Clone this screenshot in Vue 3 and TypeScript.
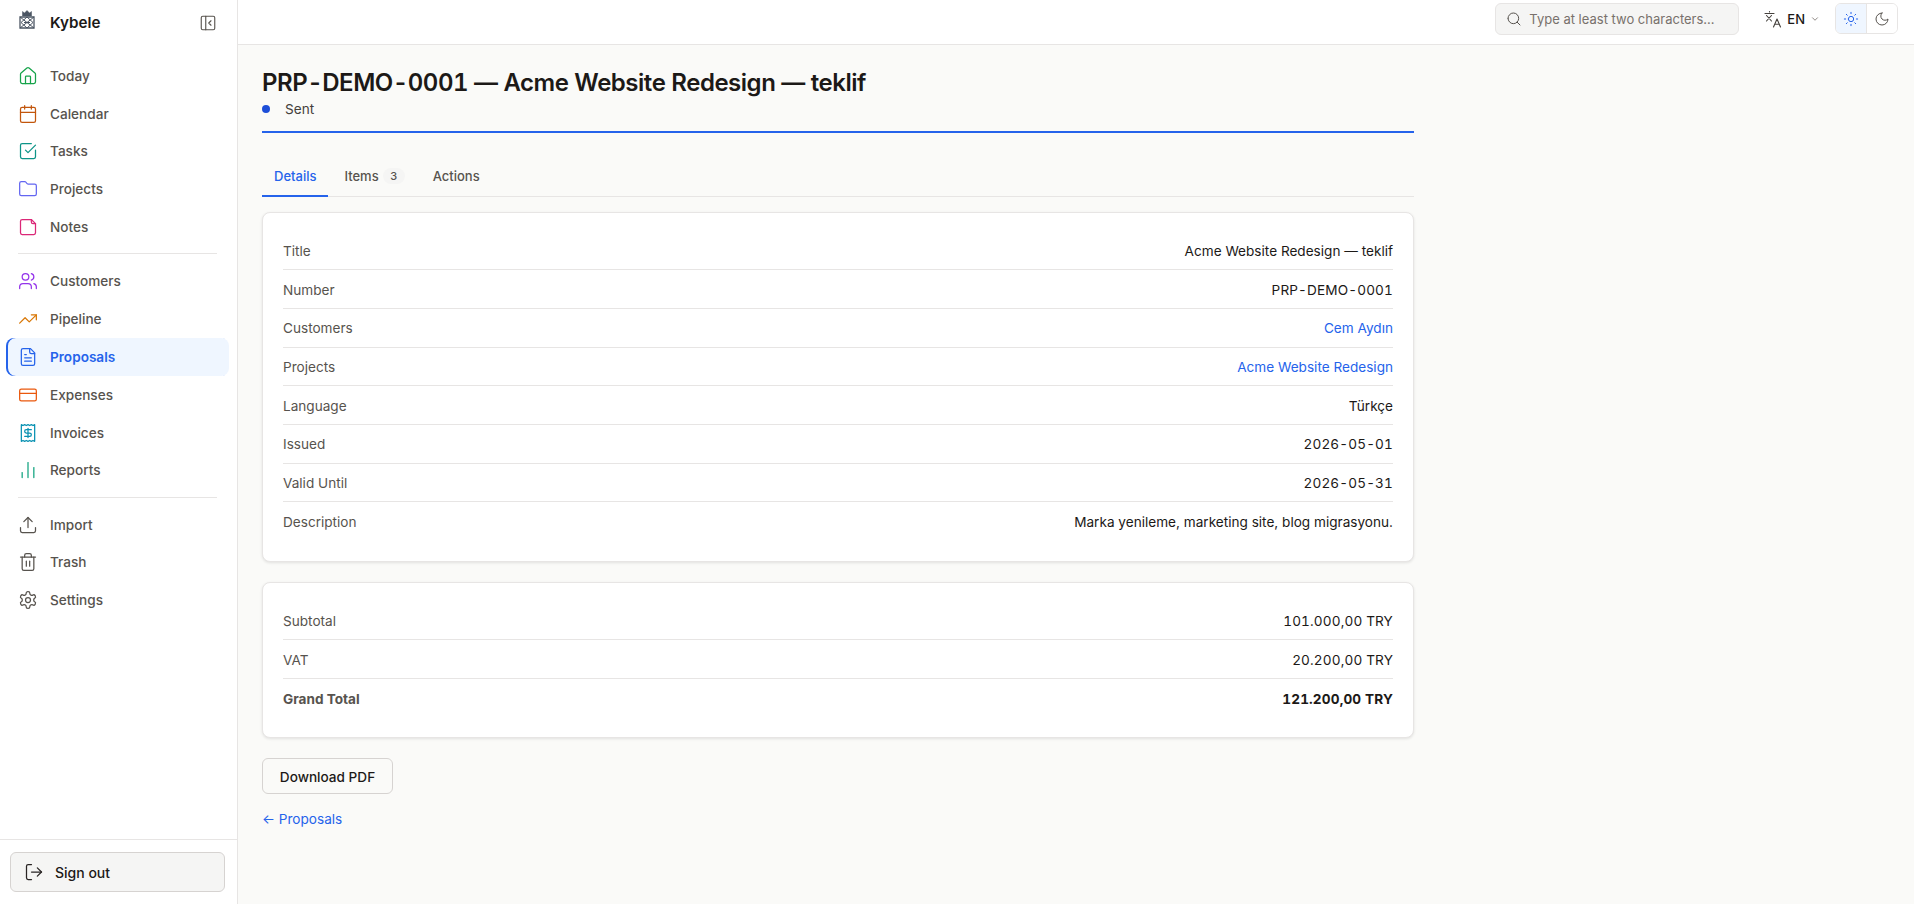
<script setup lang="ts">
interface NavItem {
  label: string
  color: string
  paths: string[]
  active?: boolean
}

const mainNav: NavItem[] = [
  { label: 'Today', color: '#16a34a', paths: ['M15 21v-8a1 1 0 0 0-1-1h-4a1 1 0 0 0-1 1v8', 'M3 10a2 2 0 0 1 .709-1.528l7-5.999a2 2 0 0 1 2.582 0l7 5.999A2 2 0 0 1 21 10v9a2 2 0 0 1-2 2H5a2 2 0 0 1-2-2z'] },
  { label: 'Calendar', color: '#c2560c', paths: ['M8 2v4', 'M16 2v4', 'M5 4h14a2 2 0 0 1 2 2v14a2 2 0 0 1-2 2H5a2 2 0 0 1-2-2V6a2 2 0 0 1 2-2z', 'M3 10h18'] },
  { label: 'Tasks', color: '#0d9488', paths: ['M21 11v8a2 2 0 0 1-2 2H5a2 2 0 0 1-2-2V5a2 2 0 0 1 2-2h11', 'm9 11 3 3 9-9'] },
  { label: 'Projects', color: '#6366f1', paths: ['M20 20a2 2 0 0 0 2-2V8a2 2 0 0 0-2-2h-7.9a2 2 0 0 1-1.69-.9L9.6 3.9A2 2 0 0 0 7.93 3H4a2 2 0 0 0-2 2v13a2 2 0 0 0 2 2Z'] },
  { label: 'Notes', color: '#db2777', paths: ['M16 3H5a2 2 0 0 0-2 2v14a2 2 0 0 0 2 2h14a2 2 0 0 0 2-2V8Z', 'M16 3v3a2 2 0 0 0 2 2h3'] }
]

const crmNav: NavItem[] = [
  { label: 'Customers', color: '#9333ea', paths: ['M16 21v-2a4 4 0 0 0-4-4H6a4 4 0 0 0-4 4v2', 'M5 7a4 4 0 1 0 8 0a4 4 0 1 0-8 0', 'M22 21v-2a4 4 0 0 0-3-3.87', 'M16 3.13a4 4 0 0 1 0 7.75'] },
  { label: 'Pipeline', color: '#d97706', paths: ['M16 7h6v6', 'm22 7-8.5 8.5-5-5L2 17'] },
  { label: 'Proposals', color: '#2563eb', active: true, paths: ['M15 2H6a2 2 0 0 0-2 2v16a2 2 0 0 0 2 2h12a2 2 0 0 0 2-2V7Z', 'M14 2v4a2 2 0 0 0 2 2h4', 'M10 9H8', 'M16 13H8', 'M16 17H8'] },
  { label: 'Expenses', color: '#ea580c', paths: ['M4 5h16a2 2 0 0 1 2 2v10a2 2 0 0 1-2 2H4a2 2 0 0 1-2-2V7a2 2 0 0 1 2-2z', 'M2 10h20'] },
  { label: 'Invoices', color: '#0891b2', paths: ['M4 2v20l2-1 2 1 2-1 2 1 2-1 2 1 2-1 2 1V2l-2 1-2-1-2 1-2-1-2 1-2-1-2 1Z', 'M16 8h-6a2 2 0 1 0 0 4h4a2 2 0 1 1 0 4H8', 'M12 17.5v-11'] },
  { label: 'Reports', color: '#10a37f', paths: ['M5 21v-6', 'M12 21V3', 'M19 21V9'] }
]

const systemNav: NavItem[] = [
  { label: 'Import', color: '#57534e', paths: ['M21 15v4a2 2 0 0 1-2 2H5a2 2 0 0 1-2-2v-4', 'M17 8l-5-5-5 5', 'M12 3v12'] },
  { label: 'Trash', color: '#57534e', paths: ['M3 6h18', 'M19 6v14c0 1-1 2-2 2H7c-1 0-2-1-2-2V6', 'M8 6V4c0-1 1-2 2-2h4c1 0 2 1 2 2v2', 'M10 11v6', 'M14 11v6'] },
  { label: 'Settings', color: '#57534e', paths: ['M12.22 2h-.44a2 2 0 0 0-2 2v.18a2 2 0 0 1-1 1.73l-.43.25a2 2 0 0 1-2 0l-.15-.08a2 2 0 0 0-2.73.73l-.22.38a2 2 0 0 0 .73 2.73l.15.1a2 2 0 0 1 1 1.72v.51a2 2 0 0 1-1 1.74l-.15.09a2 2 0 0 0-.73 2.73l.22.38a2 2 0 0 0 2.73.73l.15-.08a2 2 0 0 1 2 0l.43.25a2 2 0 0 1 1 1.73V20a2 2 0 0 0 2 2h.44a2 2 0 0 0 2-2v-.18a2 2 0 0 1 1-1.73l.43-.25a2 2 0 0 1 2 0l.15.08a2 2 0 0 0 2.73-.73l.22-.39a2 2 0 0 0-.73-2.73l-.15-.08a2 2 0 0 1-1-1.74v-.5a2 2 0 0 1 1-1.74l.15-.09a2 2 0 0 0 .73-2.73l-.22-.38a2 2 0 0 0-2.73-.73l-.15.08a2 2 0 0 1-2 0l-.43-.25a2 2 0 0 1-1-1.73V4a2 2 0 0 0-2-2z', 'M9 12a3 3 0 1 0 6 0a3 3 0 1 0-6 0'] }
]

const navGroups: NavItem[][] = [mainNav, crmNav, systemNav]

interface DetailRow {
  label: string
  value: string
  kind?: 'link' | 'num'
}

const details: DetailRow[] = [
  { label: 'Title', value: 'Acme Website Redesign — teklif' },
  { label: 'Number', value: 'PRP-DEMO-0001', kind: 'num' },
  { label: 'Customers', value: 'Cem Aydın', kind: 'link' },
  { label: 'Projects', value: 'Acme Website Redesign', kind: 'link' },
  { label: 'Language', value: 'Türkçe' },
  { label: 'Issued', value: '2026-05-01', kind: 'num' },
  { label: 'Valid Until', value: '2026-05-31', kind: 'num' },
  { label: 'Description', value: 'Marka yenileme, marketing site, blog migrasyonu.' }
]

const totals: DetailRow[] = [
  { label: 'Subtotal', value: '101.000,00 TRY', kind: 'num' },
  { label: 'VAT', value: '20.200,00 TRY', kind: 'num' }
]
</script>

<template>
  <div class="shell">
    <aside class="sidebar">
      <div class="brand">
        <svg class="logo" width="16" height="19" viewBox="0 0 16 19" fill="none" stroke="#4b5563">
          <path d="M3.5 6V1.5l2 1.5L8 .5 10.500 3l2-1.500V6z" fill="#4b5563" stroke-width="0.5" />
          <path d="M1 7h14v11H1z" stroke-width="1.3" />
          <path d="M1 7l14 11M15 7L1 18M8 7l6 5.500L8 18l-6-5.500z" stroke-width="1" />
          <path d="M5 12.500h6" stroke-width="1" />
        </svg>
        <span class="brand-name">Kybele</span>
        <svg class="collapse" width="18" height="18" viewBox="0 0 24 24" fill="none" stroke="#57534e" stroke-width="1.5" stroke-linecap="round" stroke-linejoin="round">
          <path d="M5 3h14a2 2 0 0 1 2 2v14a2 2 0 0 1-2 2H5a2 2 0 0 1-2-2V5a2 2 0 0 1 2-2z" />
          <path d="M9 3v18" />
          <path d="m16 15-3-3 3-3" />
        </svg>
      </div>

      <nav class="nav">
        <div v-for="(group, i) in navGroups" :key="i" class="nav-group">
          <a v-for="item in group" :key="item.label" class="nav-item" :class="{ active: item.active }">
            <svg width="20" height="20" viewBox="0 0 24 24" fill="none" :stroke="item.color" stroke-width="1.5" stroke-linecap="round" stroke-linejoin="round">
              <path v-for="d in item.paths" :key="d" :d="d" />
            </svg>
            <span>{{ item.label }}</span>
          </a>
        </div>
      </nav>

      <div class="sidebar-foot">
        <button class="signout">
          <svg width="20" height="20" viewBox="0 0 24 24" fill="none" stroke="#292524" stroke-width="1.5" stroke-linecap="round" stroke-linejoin="round">
            <path d="m16 17 5-5-5-5" />
            <path d="M21 12H9" />
            <path d="M9 21H5a2 2 0 0 1-2-2V5a2 2 0 0 1 2-2h4" />
          </svg>
          <span>Sign out</span>
        </button>
      </div>
    </aside>

    <div class="main">
      <header class="topbar">
        <div class="search">
          <svg width="16" height="16" viewBox="0 0 24 24" fill="none" stroke="#57534e" stroke-width="1.5" stroke-linecap="round" stroke-linejoin="round">
            <path d="m21 21-4.34-4.34" />
            <path d="M3 11a8 8 0 1 0 16 0a8 8 0 1 0-16 0" />
          </svg>
          <span>Type at least two characters...</span>
        </div>
        <button class="lang">
          <svg width="18" height="18" viewBox="0 0 18 18" fill="none" stroke="#44403c" stroke-width="1.1" stroke-linecap="round" stroke-linejoin="round">
            <path d="M1 3.500h9M5.500 1.500v.4M2.500 5.500l5 5.500M7.500 5.500l-5 5.500" />
            <path d="M9.500 17l3.500-8 3.500 8M10.700 14.200h4.600" />
          </svg>
          <span>EN</span>
          <svg width="10" height="10" viewBox="0 0 24 24" fill="none" stroke="#78716c" stroke-width="2" stroke-linecap="round" stroke-linejoin="round">
            <path d="m6 9 6 6 6-6" />
          </svg>
        </button>
        <div class="theme">
          <button class="theme-btn on">
            <svg width="16" height="16" viewBox="0 0 24 24" fill="none" stroke="#2563eb" stroke-width="1.5" stroke-linecap="round" stroke-linejoin="round">
              <path d="M8 12a4 4 0 1 0 8 0a4 4 0 1 0-8 0" />
              <path d="M12 2v2M12 20v2M4.930 4.930l1.410 1.410M17.660 17.660l1.410 1.410M2 12h2M20 12h2M6.340 17.660l-1.410 1.410M19.070 4.930l-1.410 1.410" />
            </svg>
          </button>
          <button class="theme-btn">
            <svg width="16" height="16" viewBox="0 0 24 24" fill="none" stroke="#57534e" stroke-width="1.5" stroke-linecap="round" stroke-linejoin="round">
              <path d="M12 3a6 6 0 0 0 9 9 9 9 0 1 1-9-9Z" />
            </svg>
          </button>
        </div>
      </header>

      <main class="content">
        <div class="page-head">
          <h1>PRP-DEMO-0001 — Acme Website Redesign — teklif</h1>
          <div class="status"><i class="dot"></i><span>Sent</span></div>
        </div>

        <div class="tabs">
          <a class="tab current">Details</a>
          <a class="tab">Items<span class="count">3</span></a>
          <a class="tab">Actions</a>
        </div>

        <section class="card">
          <div v-for="row in details" :key="row.label" class="row">
            <span class="label">{{ row.label }}</span>
            <span class="value" :class="row.kind">{{ row.value }}</span>
          </div>
        </section>

        <section class="card">
          <div v-for="row in totals" :key="row.label" class="row">
            <span class="label">{{ row.label }}</span>
            <span class="value" :class="row.kind">{{ row.value }}</span>
          </div>
          <div class="row grand">
            <span class="label">Grand Total</span>
            <span class="value num">121.200,00 TRY</span>
          </div>
        </section>

        <button class="download">Download PDF</button>
        <a class="back">← Proposals</a>
      </main>
    </div>
  </div>
</template>

<style>
html, body {
  margin: 0;
  background: #fafaf8;
}
</style>

<style scoped>
.shell {
  display: flex;
  height: 904px;
  overflow: hidden;
  font-family: Inter, 'Liberation Sans', sans-serif;
  font-size: 13.6px;
  color: #1c1917;
  background: #fafaf8;
}

/* sidebar */
.sidebar {
  width: 238px;
  flex: none;
  box-sizing: border-box;
  display: flex;
  flex-direction: column;
  background: #fff;
  border-right: 1px solid #e7e5e4;
}
.brand {
  display: flex;
  align-items: center;
  height: 45px;
  padding: 0 20px 0 19px;
}
.logo {
  margin-top: -7px;
}
.brand-name {
  margin-left: 15px;
  font-size: 15.2px;
  font-weight: 600;
  color: #1c1917;
}
.collapse {
  margin-left: auto;
}
.nav {
  flex: 1;
  padding: 12px 8px 0 6px;
}
.nav-group + .nav-group {
  position: relative;
  margin-top: 7.5px;
  padding-top: 9px;
}
.nav-group + .nav-group::before {
  content: '';
  position: absolute;
  top: 0;
  left: 12px;
  right: 12px;
  border-top: 1px solid #e7e5e4;
}
.nav-item {
  display: flex;
  align-items: center;
  gap: 12px;
  height: 37.8px;
  box-sizing: border-box;
  padding-left: 12px;
  color: #57534e;
  font-weight: 500;
  border-radius: 8px;
}
.nav-item.active {
  background: #eff6ff;
  color: #2563eb;
  font-weight: 600;
  box-shadow: inset 2px 0 0 #2563eb;
}
.sidebar-foot {
  padding: 12px 12px 12px 10px;
  border-top: 1px solid #e7e5e4;
}
.signout {
  display: flex;
  align-items: center;
  gap: 11px;
  width: 100%;
  height: 40px;
  padding: 0 13px;
  background: #f5f5f4;
  border: 1px solid #d6d3d1;
  border-radius: 6px;
  font: inherit;
  font-size: 14px;
  font-weight: 500;
  color: #1c1917;
}

/* top bar */
.main {
  flex: 1;
  min-width: 0;
  display: flex;
  flex-direction: column;
}
.topbar {
  display: flex;
  align-items: center;
  justify-content: flex-end;
  height: 45px;
  flex: none;
  box-sizing: border-box;
  padding: 0 16px 7px 0;
  background: #fff;
  border-bottom: 1px solid #e7e5e4;
}
.search {
  display: flex;
  align-items: center;
  gap: 7px;
  width: 244px;
  height: 32px;
  box-sizing: border-box;
  padding: 0 10px;
  background: #f5f5f4;
  border: 1px solid #e7e5e4;
  border-radius: 6px;
  color: #78716c;
  font-size: 13px;
}
.lang {
  display: flex;
  align-items: center;
  gap: 5px;
  margin-left: 25px;
  padding: 0;
  background: none;
  border: 0;
  font: inherit;
  font-size: 13px;
  font-weight: 500;
  color: #1c1917;
}
.theme {
  display: flex;
  margin-left: 15px;
  border: 1px solid #e7e5e4;
  border-radius: 6px;
  overflow: hidden;
}
.theme-btn {
  display: flex;
  align-items: center;
  justify-content: center;
  width: 30.5px;
  height: 29px;
  padding: 0;
  background: #fff;
  border: 0;
}
.theme-btn.on {
  background: #eff6ff;
  border-right: 1px solid #e7e5e4;
}

/* content */
.content {
  width: 1152px;
  padding: 24px 0 0 24px;
  box-sizing: content-box;
}
.page-head {
  padding-bottom: 10.5px;
  border-bottom: 2px solid #2563eb;
}
h1 {
  margin: 0;
  font-size: 24px;
  line-height: 28px;
  font-weight: 600;
  letter-spacing: -0.02em;
  font-variant-numeric: tabular-nums;
  color: #1c1917;
}
.status {
  display: flex;
  align-items: center;
  gap: 15px;
  height: 22px;
  margin-top: 1px;
  color: #44403c;
}
.dot {
  width: 8px;
  height: 8px;
  border-radius: 50%;
  background: #1d4ed8;
}
.tabs {
  display: flex;
  gap: 4px;
  margin-top: 24.5px;
  height: 39px;
  border-bottom: 1px solid #e7e5e4;
}
.tab {
  display: flex;
  align-items: center;
  padding: 0 12px;
  margin-bottom: -1px;
  font-size: 13px;
  font-weight: 500;
  color: #57534e;
  border-bottom: 2px solid transparent;
}
.tab.current {
  color: #2563eb;
  border-bottom-color: #2563eb;
}
.count {
  width: 22px;
  height: 16px;
  margin-left: 4px;
  border-radius: 8px;
  background: #f5f5f4;
  font-size: 11px;
  line-height: 16px;
  text-align: center;
  color: #57534e;
}
.card {
  margin-top: 14.5px;
  padding: 19px 20px 19.5px;
  background: #fff;
  border: 1px solid #e7e5e4;
  border-radius: 8px;
  box-shadow: 0 1px 3px rgba(0, 0, 0, 0.1);
}
.card + .card {
  margin-top: 20px;
}
.row {
  display: flex;
  align-items: center;
  justify-content: space-between;
  height: 38.7px;
  box-sizing: border-box;
  padding-top: 1px;
  border-bottom: 1px solid #e7e5e4;
}
.row:last-child {
  border-bottom: 0;
}
.label {
  color: #57534e;
}
.value {
  color: #1c1917;
}
.value.link {
  color: #2563eb;
}
.value.num {
  font-variant-numeric: tabular-nums;
  letter-spacing: 0.01em;
}
.grand .label,
.grand .value {
  font-weight: 700;
}
.download {
  display: block;
  width: 131px;
  height: 36px;
  margin-top: 20px;
  padding: 1px 0 0;
  background: #fafaf8;
  border: 1px solid #d6d3d1;
  border-radius: 6px;
  font: inherit;
  font-weight: 500;
  color: #1c1917;
}
.back {
  display: block;
  margin-top: 17px;
  color: #2563eb;
}
</style>
